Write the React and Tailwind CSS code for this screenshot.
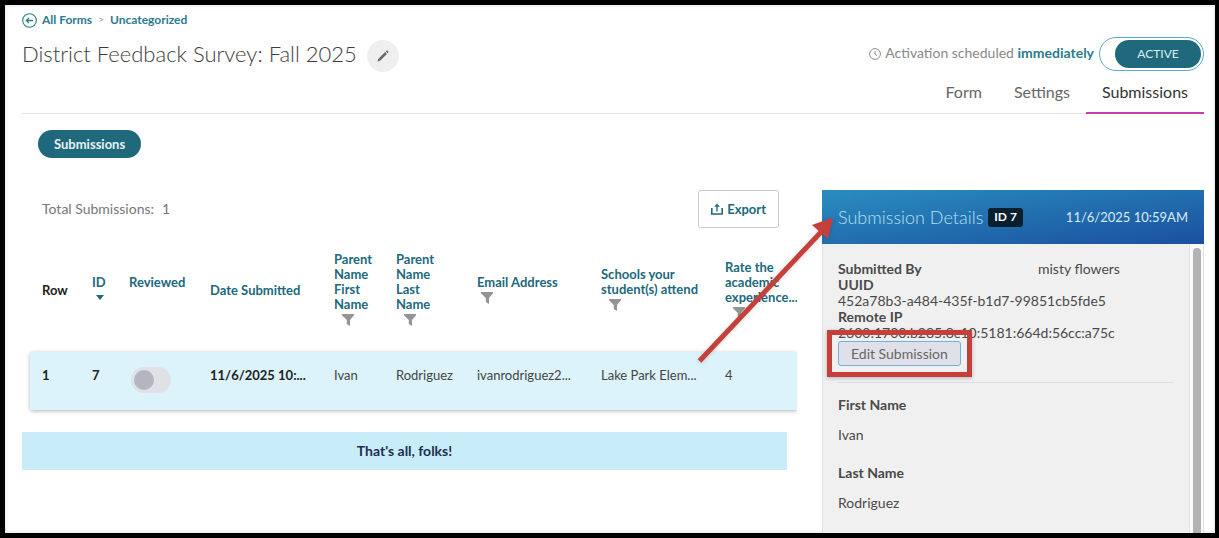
import React from "react";

const FilterIcon = () => (
    <svg viewBox="0 0 12 12" className="w-3 h-3 fill-[#949494]" aria-hidden="true">
        <path d="M0 0h12v1.2L8 6v6L4.8 10V6L0 1.2z" />
    </svg>
);

const BackIcon = () => (
    <svg viewBox="0 0 15 15" className="w-[15px] h-[15px] text-[#2a7b8d]" fill="none" stroke="currentColor" aria-hidden="true">
        <circle cx="7.5" cy="7.5" r="6.8" strokeWidth="1.1" />
        <path d="M11 7.5H4.6M7 4.9 4.4 7.5 7 10.1" strokeWidth="1.3" />
    </svg>
);

const PencilIcon = () => (
    <svg viewBox="0 0 14 14" className="w-3 h-3 fill-[#6a6a6a]" aria-hidden="true">
        <path d="M.6 13.400l.8-3 8-8 2.200 2.200-8 8z" />
        <path d="M10.200 1.600l.8-.8c.4-.4.9-.4 1.300 0l.9.9c.4.4.4.9 0 1.300l-.8.8z" />
    </svg>
);

const ClockIcon = () => (
    <svg viewBox="0 0 12 12" className="w-3 h-3 text-[#8c8c8c]" fill="none" stroke="currentColor" aria-hidden="true">
        <circle cx="6" cy="6" r="5.4" />
        <path d="M6 3v3.3l2 1.2" />
    </svg>
);

const ExportIcon = () => (
    <svg viewBox="0 0 12 12" className="w-3 h-3 text-[#20697c]" fill="none" stroke="currentColor" aria-hidden="true">
        <path d="M.8 5v6h10.4V5" strokeWidth="1.6" />
        <path d="M6 8.4V2.4" strokeWidth="1.4" />
        <path d="M3.2 3.8 6 .6l2.8 3.2z" fill="currentColor" stroke="none" />
    </svg>
);

const App = () => {
    const tabs = ["Form", "Settings", "Submissions"];

    const columns = [
        { lines: ["Row"], width: "w-[50px]", plain: true },
        { lines: ["ID"], width: "w-[37px]", sorted: true },
        { lines: ["Reviewed"], width: "w-[81px]", spacer: true },
        { lines: ["Date Submitted"], width: "w-[124px]" },
        { lines: ["Parent", "Name", "First", "Name"], width: "w-[62px]", filter: "pl-2" },
        { lines: ["Parent", "Name", "Last", "Name"], width: "w-[81px]", filter: "pl-2" },
        { lines: ["Email Address"], width: "w-[124px]", filter: "pl-1" },
        { lines: ["Schools your", "student(s) attend"], width: "w-[124px]", filter: "pl-2" },
        { lines: ["Rate the", "academic", "experience..."], width: "", filter: "pl-2" }
    ];

    const answers = ["Ivan", "Rodriguez", "ivanrodriguez2...", "Lake Park Elem...", "4"];

    const meta = [
        { label: "UUID", value: "452a78b3-a484-435f-b1d7-99851cb5fde5" },
        { label: "Remote IP", value: "2600:1700:b285:8c10:5181:664d:56cc:a75c" }
    ];

    const fields = [
        { label: "First Name", value: "Ivan" },
        { label: "Last Name", value: "Rodriguez" }
    ];

    return (
        <div className="min-h-screen flex flex-col bg-white border-[5px] border-r-4 border-black pl-[17px] pr-[11px] overflow-hidden font-['Lato',sans-serif] text-sm text-[#4a4a4a] shadow-[inset_0_0_4px_rgba(0,0,0,0.15)]">

            {/* Page Header */}
            <header className="flex justify-between border-b border-[#e2e2e2]">
                <div className="pt-[7px]">
                    <nav className="flex items-center h-4 text-xs font-bold" aria-label="Breadcrumb">
                        <BackIcon />
                        <a href="#forms" className="ml-[5px] text-[#2a7b8d]">All Forms</a>
                        <span className="mx-[6px] text-[10px] font-normal text-[#999]">&gt;</span>
                        <a href="#uncategorized" className="text-[#2a7b8d]">Uncategorized</a>
                    </nav>
                    <div className="flex items-center gap-[10px] mt-3">
                        <h1 className="pb-1 text-[22px] leading-7 font-light text-[#3d3d3d]">District Feedback Survey: Fall 2025</h1>
                        <button aria-label="Rename form" className="w-8 h-8 rounded-full bg-[#efefef] flex items-center justify-center">
                            <PencilIcon />
                        </button>
                    </div>
                </div>

                <div className="flex flex-col items-end pt-8">
                    <div className="flex items-center">
                        <ClockIcon />
                        <span className="ml-1 pb-[2px] text-[#888]">
                            Activation scheduled <a href="#schedule" className="font-bold text-[#2a7b8d]">immediately</a>
                        </span>
                        <button
                            role="switch"
                            aria-checked="true"
                            className="ml-[5px] w-[105px] h-[34px] p-[2px] rounded-full border border-[#5aa9d0] flex justify-end text-xs text-[#d9eef3]"
                        >
                            <span className="w-[86px] h-7 rounded-full bg-[#20697c] flex items-center justify-center">ACTIVE</span>
                        </button>
                    </div>
                    <nav className="flex mt-[9px] -mb-px text-base leading-6">
                        {tabs.map((tab) => (
                            <a
                                key={tab}
                                href={`#${tab.toLowerCase()}`}
                                className={
                                    tab === "Submissions"
                                        ? "px-4 pb-2 border-b-2 border-[#c040a8] text-[#333]"
                                        : "px-4 pb-2 border-b-2 border-transparent text-[#666]"
                                }
                            >
                                {tab}
                            </a>
                        ))}
                    </nav>
                </div>
            </header>

            <div className="pl-4 pt-4">
                <button className="h-7 px-4 rounded-full bg-[#20697c] text-[13px] text-[#e4f3f6] font-bold">Submissions</button>
            </div>

            <div className="flex flex-1 gap-[25px] mt-8">

                {/* Submissions List */}
                <main className="flex-1 min-w-0">
                    <div className="flex items-center justify-between h-[38px] pl-5 pr-[18px]">
                        <p className="flex gap-2 text-[#777]">
                            <span>Total Submissions:</span>
                            <span>1</span>
                        </p>
                        <button className="flex items-center gap-1 h-full px-3 border border-[#c9c9d4] rounded-[3px] text-[13px] font-bold text-[#20697c]">
                            <ExportIcon />
                            Export
                        </button>
                    </div>

                    <div className="overflow-hidden pl-2 pt-6 pb-[22px]">
                        <table className="table-fixed w-full border-separate border-spacing-0">
                            <thead>
                                <tr>
                                    {columns.map((col, index) => (
                                        <th
                                            key={index}
                                            scope="col"
                                            className={`${col.width} pl-3 pb-6 text-left align-middle font-bold text-[13px] leading-[15px] whitespace-nowrap ${col.plain ? "text-[#222]" : "text-[#20697c]"}`}
                                        >
                                            {col.lines.map((line, i) => (
                                                <span key={i} className="block">{line}</span>
                                            ))}
                                            {col.filter && (
                                                <span className={`flex items-center h-4 ${col.filter}`}>
                                                    <FilterIcon />
                                                </span>
                                            )}
                                            {col.sorted && (
                                                <span className="flex items-center h-4 pl-1">
                                                    <svg viewBox="0 0 8 5" className="w-2 h-[5px] fill-[#20697c]" aria-hidden="true">
                                                        <path d="M0 0h8L4 5z" />
                                                    </svg>
                                                </span>
                                            )}
                                            {col.spacer && <span className="block h-4" />}
                                        </th>
                                    ))}
                                </tr>
                            </thead>
                            <tbody>
                                <tr className="h-[58px] bg-[#dcf3fb] rounded-l-[3px] shadow-[0_1px_4px_rgba(0,0,0,0.3)] align-top text-[13px] leading-5 text-[#444] whitespace-nowrap">
                                    <td className="pl-3 pt-[13px] font-bold text-[#222]">1</td>
                                    <td className="pl-3 pt-[13px] font-bold text-[#222]">7</td>
                                    <td className="pl-[14px] pt-[15px]">
                                        <input
                                            type="checkbox"
                                            aria-label="Reviewed"
                                            className="block appearance-none w-10 h-[26px] p-[3px] rounded-full bg-[#e0e1e6] before:block before:w-5 before:h-5 before:rounded-full before:bg-[#b3b6c0]"
                                        />
                                    </td>
                                    <td className="pl-3 pt-[13px] font-bold text-[#222]">11/6/2025 10:...</td>
                                    {answers.map((answer) => (
                                        <td key={answer} className="pl-3 pt-[13px]">{answer}</td>
                                    ))}
                                </tr>
                            </tbody>
                        </table>
                    </div>

                    <p className="mr-[10px] py-[9px] bg-[#c8ecf8] text-center font-bold text-[#1d2f50]">That's all, folks!</p>
                </main>

                {/* Submission Details */}
                <aside className="relative w-[382px] shrink-0 flex flex-col">
                    <div className="flex items-center h-[54px] px-4 bg-linear-to-br from-[#2b8dbf] to-[#1c509f] text-white">
                        <h2 className="text-lg font-light text-[#b5e0f5]">Submission Details</h2>
                        <span className="ml-[5px] px-[6px] h-[19px] flex items-center rounded-[3px] bg-[#08202e] text-xs font-bold">ID 7</span>
                        <span className="ml-auto text-[13px] text-[#d9ecf8]">11/6/2025 10:59AM</span>
                    </div>

                    <div className="flex flex-1 border-x border-[#dfe0e8] bg-[#f0f0f0]">
                        <div className="flex-1 pl-[15px] pr-4 pt-[17px]">
                            <dl className="leading-4">
                                <div className="flex">
                                    <dt className="w-[200px] font-bold">Submitted By</dt>
                                    <dd>misty flowers</dd>
                                </div>
                                {meta.map((item) => (
                                    <div key={item.label}>
                                        <dt className="font-bold">{item.label}</dt>
                                        <dd>{item.value}</dd>
                                    </div>
                                ))}
                            </dl>

                            <div className="relative w-fit">
                                <button className="block h-[25px] px-3 border border-[#6cb2e2] rounded-[3px] bg-[#e0e1e8] text-[#666]">
                                    Edit Submission
                                </button>
                                <div className="absolute -inset-[11px] border-[5px] border-[#c5403b] shadow-[0_1px_4px_rgba(0,0,0,0.25)] pointer-events-none" />
                            </div>

                            <dl className="mt-4 pt-3 border-t border-[#dddee6] leading-5">
                                {fields.map((field) => (
                                    <div key={field.label} className="mb-[18px]">
                                        <dt className="mb-[10px] font-bold">{field.label}</dt>
                                        <dd>{field.value}</dd>
                                    </div>
                                ))}
                            </dl>
                        </div>

                        {/* Scrollbar */}
                        <div className="w-[14px] flex flex-col items-center pt-1 border-l border-[#e2e2e6] bg-[#fafafa]">
                            <div className="w-2 flex-1 rounded-t-full bg-[#b3b3b3]" />
                        </div>
                    </div>

                    {/* Callout arrow */}
                    <svg viewBox="0 0 140 152" className="absolute -left-[126px] top-6 w-[140px] h-[152px] drop-shadow-sm pointer-events-none" aria-hidden="true">
                        <path d="M3.500 147 126 17" stroke="#c5403b" strokeWidth="5" />
                        <path d="M137 3.500 132 25 116 11z" fill="#c5403b" />
                    </svg>
                </aside>
            </div>
        </div>
    );
};

export default App;
